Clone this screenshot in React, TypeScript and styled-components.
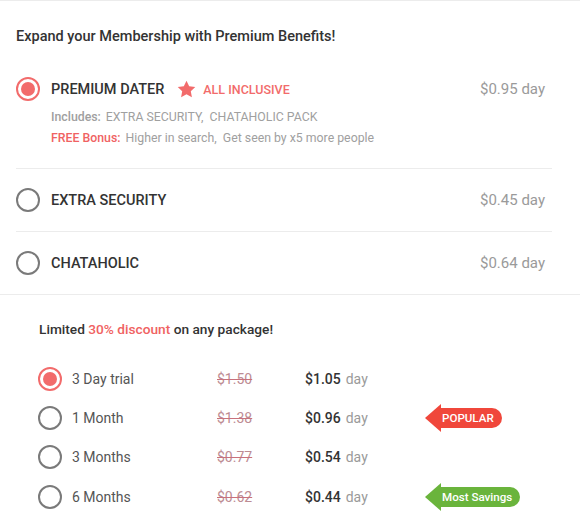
import React from "react";
import styled, { createGlobalStyle } from "styled-components";

const Global = createGlobalStyle`
  html, body { margin: 0; padding: 0; background: #fff; }
  body { font-family: Roboto, "Noto Sans", Arial, sans-serif; color: #333; }
  * { box-sizing: border-box; }
`;

const Page = styled.div`
  width: 580px;
  border-top: 1px solid #ececec;
`;

const Benefits = styled.section`
  padding: 0 28px 0 16px;
`;

const Heading = styled.h2`
  margin: 27px 0 0;
  font-size: 14.5px;
  line-height: 18px;
  font-weight: 500;
  color: #333;
`;

const PackRow = styled.div<{ $first?: boolean }>`
  display: flex;
  flex-direction: column;
  justify-content: center;
  border-top: ${(p) => (p.$first ? "none" : "1px solid #ececec")};
  padding: ${(p) => (p.$first ? "33px 0 21px" : "0")};
  height: ${(p) => (p.$first ? "auto" : "63px")};
`;

const PackHead = styled.div`
  display: flex;
  align-items: center;
  height: 20px;
`;

const Radio = styled.span<{ $on?: boolean }>`
  flex: none;
  width: 24px;
  height: 24px;
  border-radius: 50%;
  border: 2px solid ${(p) => (p.$on ? "#f26b6b" : "#7a7a7a")};
  display: flex;
  align-items: center;
  justify-content: center;
  &::after {
    content: "";
    display: ${(p) => (p.$on ? "block" : "none")};
    width: 14px;
    height: 14px;
    border-radius: 50%;
    background: #f26b6b;
  }
`;

const PackTitle = styled.span`
  margin-left: 11px;
  font-size: 14.5px;
  font-weight: 500;
  color: #333;
  text-transform: uppercase;
`;

const Tag = styled.span`
  display: flex;
  align-items: center;
  margin-left: 13px;
  gap: 7px;
  font-size: 12.5px;
  font-weight: 500;
  color: #f26b6b;
`;

const PackPrice = styled.span`
  margin-left: auto;
  padding-right: 7px;
  font-size: 15px;
  color: #9a9a9a;
`;

const Details = styled.div`
  margin-left: 35px;
  margin-top: 9px;
  display: flex;
  flex-direction: column;
  gap: 3px;
  font-size: 12.3px;
  line-height: 18px;
  color: #a0a0a0;
`;

const Label = styled.span<{ $red?: boolean }>`
  font-weight: 500;
  color: ${(p) => (p.$red ? "#f06262" : "#a0a0a0")};
  margin-right: 5px;
`;

const Plans = styled.section`
  border-top: 1px solid #ececec;
  padding: 25px 0 0 38px;
`;

const Intro = styled.p`
  margin: 0 0 21px 1px;
  font-size: 13.7px;
  line-height: 18px;
  font-weight: 500;
  color: #333;
`;

const Red = styled.span`
  color: #f06262;
`;

const PlanList = styled.div`
  display: flex;
  flex-direction: column;
`;

const PlanRow = styled.div`
  display: grid;
  grid-template-columns: 24px 155px 88px 120px auto;
  align-items: center;
  height: 39.4px;
`;

const PlanName = styled.span`
  margin-left: 10px;
  font-size: 14px;
  color: #555;
`;

const OldPrice = styled.span`
  font-size: 14px;
  color: #bd8c93;
  text-decoration: line-through;
  text-decoration-color: #c9727d;
`;

const NewPrice = styled.span`
  font-size: 14px;
  font-weight: 500;
  color: #333;
  span {
    font-weight: 400;
    color: #9a9a9a;
    margin-left: 5px;
  }
`;

const Badge = styled.span<{ $color: string }>`
  position: relative;
  justify-self: start;
  margin-left: 15px;
  height: 20px;
  padding: 0 8px 0 2px;
  border-radius: 0 10px 10px 0;
  background: ${(p) => p.$color};
  color: #fff;
  font-size: 11.6px;
  font-weight: 500;
  line-height: 20px;
  white-space: nowrap;
  &::before {
    content: "";
    position: absolute;
    left: -15px;
    top: -4px;
    border-right: 16px solid ${(p) => p.$color};
    border-top: 14px solid transparent;
    border-bottom: 14px solid transparent;
  }
`;

const Star = () => (
  <svg width="19" height="18" viewBox="0 0 24 23" aria-hidden="true">
    <path
      d="M12 0.8l3.4 7.1 7.8 1.0-5.7 5.4 1.4 7.7L12 18.3l-6.9 3.7 1.4-7.7L0.8 8.9l7.8-1.0z"
      fill="#f26b6b"
    />
  </svg>
);

const packs = [
  { name: "EXTRA SECURITY", price: "$0.45 day" },
  { name: "CHATAHOLIC", price: "$0.64 day" },
];

const plans = [
  { name: "3 Day trial", old: "$1.50", price: "$1.05", on: true },
  { name: "1 Month", old: "$1.38", price: "$0.96", badge: { text: "POPULAR", color: "#f0473b" } },
  { name: "3 Months", old: "$0.77", price: "$0.54" },
  { name: "6 Months", old: "$0.62", price: "$0.44", badge: { text: "Most Savings", color: "#6ab43c" } },
];

export default function App() {
  return (
    <Page>
      <Global />
      <Benefits>
        <Heading>Expand your Membership with Premium Benefits!</Heading>
        <PackRow $first>
          <PackHead>
            <Radio $on />
            <PackTitle>Premium Dater</PackTitle>
            <Tag>
              <Star />
              ALL INCLUSIVE
            </Tag>
            <PackPrice>$0.95 day</PackPrice>
          </PackHead>
          <Details>
            <div>
              <Label>Includes:</Label>EXTRA SECURITY, &nbsp;CHATAHOLIC PACK
            </div>
            <div>
              <Label $red>FREE Bonus:</Label>Higher in search, &nbsp;Get seen by x5 more people
            </div>
          </Details>
        </PackRow>
        {packs.map((p) => (
          <PackRow key={p.name}>
            <PackHead>
              <Radio />
              <PackTitle>{p.name}</PackTitle>
              <PackPrice>{p.price}</PackPrice>
            </PackHead>
          </PackRow>
        ))}
      </Benefits>
      <Plans>
        <Intro>
          Limited <Red>30% discount</Red> on any package!
        </Intro>
        <PlanList>
          {plans.map((p) => (
            <PlanRow key={p.name}>
              <Radio $on={p.on} />
              <PlanName>{p.name}</PlanName>
              <OldPrice>{p.old}</OldPrice>
              <NewPrice>
                {p.price}
                <span>day</span>
              </NewPrice>
              {p.badge ? <Badge $color={p.badge.color}>{p.badge.text}</Badge> : <span />}
            </PlanRow>
          ))}
        </PlanList>
      </Plans>
    </Page>
  );
}
